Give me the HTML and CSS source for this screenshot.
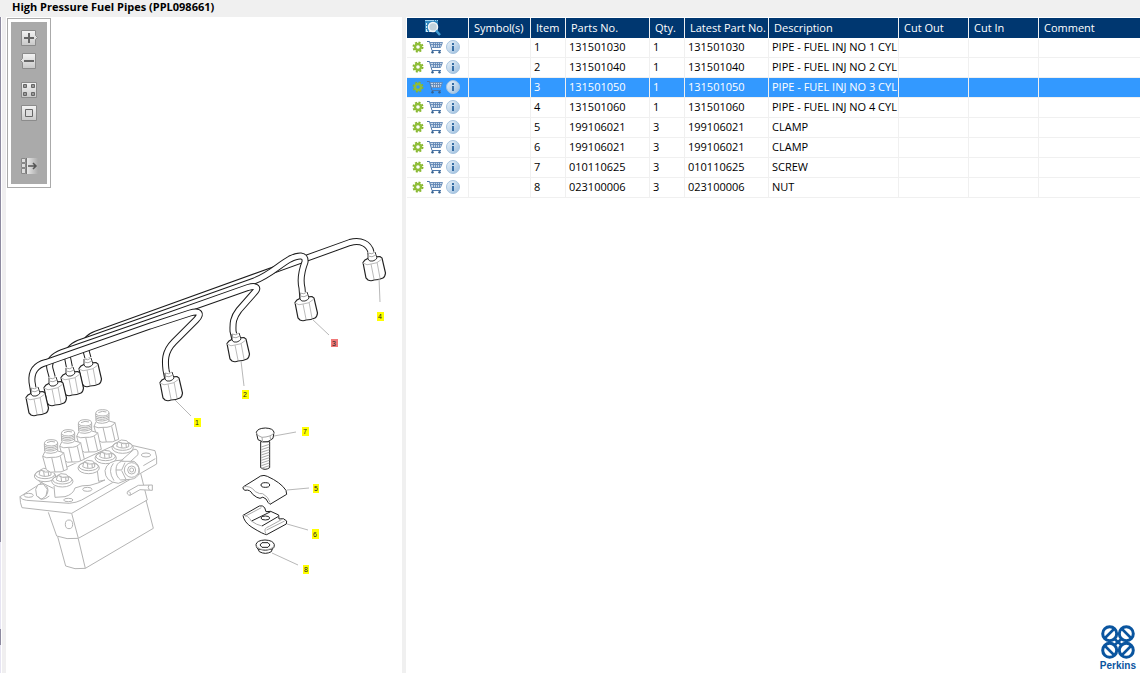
FILE: index.html
```html
<!DOCTYPE html>
<html lang="en">
<head>
<meta charset="utf-8">
<title>High Pressure Fuel Pipes (PPL098661)</title>
<link rel="stylesheet" href="styles.css">
</head>
<body>
<svg class="sprite" aria-hidden="true">
  <defs>
    <linearGradient id="btn" x1="0" y1="0" x2="0" y2="1"><stop offset="0" stop-color="#f4f4f4"/><stop offset="1" stop-color="#c8c8c8"/></linearGradient>
    <linearGradient id="fade" x1="0" y1="0" x2="1" y2="0"><stop offset="0" stop-color="#eee"/><stop offset="1" stop-color="#aaa"/></linearGradient>
    <linearGradient id="ball" x1="0" y1="0" x2="1" y2="1"><stop offset="0" stop-color="#eef5fb"/><stop offset="1" stop-color="#98bbdc"/></linearGradient>
    <symbol id="gear" viewBox="0 0 12 12">
      <circle cx="6" cy="6" r="4.600" fill="none" stroke="#86b52f" stroke-width="1.800" stroke-dasharray="2 1.610"/>
      <circle cx="6" cy="6" r="3" fill="none" stroke="#8fbe38" stroke-width="2.400"/>
    </symbol>
    <symbol id="cart" viewBox="0 0 16 14">
      <path d="M3 2.500H15L13.500 8H5z" fill="#c9d7e8"/>
      <path d="M0 1.500H2.500L5 10.500H14" fill="none" stroke="#4a76aa"/>
      <path d="M3 2.500H15.500L13.500 7.500H4.500M4 4.500H15M6.500 2.500V8M8.500 2.500V8M10.500 2.500V8M12.500 2.500V8" fill="none" stroke="#6288b6" stroke-width=".9"/>
      <circle cx="5.500" cy="12.300" r="1.200" fill="#35608f"/><circle cx="12.500" cy="12.300" r="1.200" fill="#35608f"/>
    </symbol>
    <symbol id="info" viewBox="0 0 14 14">
      <circle cx="7" cy="7" r="6.500" fill="url(#ball)" stroke="#a5c3df"/>
      <path d="M6 3h2v2H6zM6 6h2v5H6z" fill="#376da3"/>
    </symbol>
    <g id="nut">
      <path d="M-9 4.500L-7 2Q-4 0 0-1L8-1.500L10 0L13.500 15Q13 19 11 20Q7 22 2 22Q-1 23.500-4 22L-6 20z" fill="#fff" stroke="#222" stroke-width="1.200"/>
      <path d="M-9 5Q-5 8-1 6Q5 6 10 1M-1 6L2 21M5 4L8 20" fill="none" stroke="#bbb"/>
      <path d="M-4-6Q0-4 3-7L5 0Q1 4-4 2z" fill="#fff"/>
      <path d="M-4-5L-4 1Q-3 4 1 3Q4 2 5 0L3-6" fill="none" stroke="#333"/>
      <path d="M-4-5Q0-3 3-6M-4-2Q0 0 4-3" fill="none" stroke="#aaa"/>
    </g>
    <g id="union" class="part">
      <path d="M-24 43L-13 30L-13 26H15V30L38 31L50 84Q20 104-14 84z" fill="#fff" stroke="none"/>
      <path d="M-20 6Q-20-7 0-7Q20-7 20 3L20 27Q18 32 0 34Q-17 34-19 28zM-20 6Q-14 13 2 12Q18 11 20 3M-19 13Q0 22 20 11M-19 18Q0 27 20 16M-19 23Q0 32 20 21M-12 2Q0-5 12 0"/>
      <path d="M-19 30L-25 43L-14 83M20 27L38 32L49 82M-25 43Q-14 50 2 46Q28 48 38 32M2 46L12 90M28 43L38 86M-14 83Q-2 95 12 90Q30 93 49 82"/>
    </g>
    <g id="bolt" class="part">
      <ellipse cx="0" cy="8" rx="32" ry="17" fill="#fff"/>
      <ellipse cx="0" cy="3" rx="29" ry="13"/>
      <path d="M-18 4L-14-10L-4-15L12-13L18-5V5Q0 14-18 4M-14-10Q0 0 18-5M-4-5L-2 9M10-4L11 8" fill="#fff"/>
    </g>
  </defs>
</svg>

<header class="title-bar"><h1>High Pressure Fuel Pipes (PPL098661)</h1></header>

<main class="workspace">
  <div class="edge"><span class="edge-upper"></span><span class="edge-lower"></span></div>

  <section class="viewer" aria-label="Illustration">
    <svg class="drawing" viewBox="6 17 396 656" preserveAspectRatio="xMinYMin meet" role="img" aria-label="Fuel pipes, injection pump, clamps, screw and nut">
      <g class="pump" transform="translate(10 400) scale(.33333)">
        <path d="M115 337L140 408Q170 420 205 415L412 300L392 220M185 340L205 415M143 410L167 498L195 506L226 505L430 385L408 300M205 417L226 505"/>
        <ellipse cx="177" cy="373" rx="11" ry="13"/>
        <path d="M30 290L90 252L130 220L330 128L435 152Q442 170 440 192L185 340L36 323Q30 310 30 290z" fill="#fff"/>
        <path d="M30 290Q34 300 50 301L178 310Q200 308 215 300L350 224M400 197L436 176"/>
        <ellipse cx="56" cy="286" rx="14" ry="6"/><ellipse cx="175" cy="300" rx="14" ry="5"/><ellipse cx="232" cy="268" rx="14" ry="6"/><ellipse cx="408" cy="165" rx="14" ry="6"/>
        <path d="M132 258L135 292L165 290Q190 283 195 264Q215 255 240 256Q265 250 285 240L266 244L262 212M85 225L88 245L130 265"/>
        <use href="#bolt" x="105" y="220"/>
        <use href="#bolt" x="338" y="135"/>
        <use href="#union" x="277" y="36"/>
        <use href="#bolt" x="287" y="166"/>
        <use href="#union" x="225" y="66"/>
        <use href="#bolt" x="236" y="196"/>
        <use href="#union" x="174" y="96"/>
        <use href="#bolt" x="157" y="236"/>
        <use href="#union" x="123" y="126"/>
        <path d="M77 268L84 254L100 252L112 268L108 288L94 298L80 288zM108 256Q120 270 108 288M84 290Q96 306 118 288" fill="#fff"/>
        <path d="M330 185L372 148Q386 146 384 164L350 195M340 180Q290 180 285 212Q285 246 325 250L350 240" fill="#fff"/>
        <path d="M318 210Q318 188 335 184L372 184Q390 195 388 218Q382 236 362 238L332 240Q318 230 318 210z" fill="#fff"/>
        <path d="M318 210H335L345 188M335 212L348 238M310 190Q292 212 312 242"/>
        <circle cx="365" cy="210" r="22"/><circle cx="365" cy="210" r="12"/><circle cx="365" cy="210" r="6"/>
        <path d="M353 274L385 256L427 255V271L390 269L360 286Q348 284 353 274M417 255Q412 262 418 270M355 275Q364 276 360 286" fill="#fff"/>
      </g>

      <g class="pipes">
        <path class="outer" d="M88 358L85.500 349C84 342 88 337 96 334L150 314.500L350 242.500C361 239.500 369 244 371 252L372 258"/>
        <path class="inner" d="M88 358L85.500 349C84 342 88 337 96 334L150 314.500L350 242.500C361 239.500 369 244 371 252L372 258"/>
        <use href="#nut" x="88" y="364"/>
        <path class="outer" d="M70 370L68 360C66 352 70 347 79 343L150 318L254 281C270 275 279 265 290 259C298 255 306 254 305 262C302 270 300 280 302 288L303 300"/>
        <path class="inner" d="M70 370L68 360C66 352 70 347 79 343L150 318L254 281C270 275 279 265 290 259C298 255 306 254 305 262C302 270 300 280 302 288L303 300"/>
        <use href="#nut" x="70" y="373"/>
        <path class="outer" d="M53 380L50 369C48 361 53 356 62 352.500L150 322L248 287.500C257 285 259 288 254 293L239 310C232 319 233 325 233 331L235 340"/>
        <path class="inner" d="M53 380L50 369C48 361 53 356 62 352.500L150 322L248 287.500C257 285 259 288 254 293L239 310C232 319 233 325 233 331L235 340"/>
        <use href="#nut" x="53" y="383"/>
        <path class="outer" d="M34 394L32 382C31 371 36 365 46 362.500L150 326L190 313C200 310 202 314 196 320L174 342C164 352 165 362 166 370L168 380"/>
        <path class="inner" d="M34 394L32 382C31 371 36 365 46 362.500L150 326L190 313C200 310 202 314 196 320L174 342C164 352 165 362 166 370L168 380"/>
        <use href="#nut" x="35" y="393"/>
        <use href="#nut" x="169" y="378"/>
        <use href="#nut" x="236" y="339"/>
        <use href="#nut" x="304" y="298"/>
        <use href="#nut" x="372" y="258"/>
      </g>

      <g class="fasteners" transform="translate(230 415) scale(.33333)">
        <path d="M92 80V158Q105 168 119 158V80z"/>
        <path class="light" d="M94 96L118 88M94 104L118 96M94 112L118 104M94 120L118 112M94 128L118 120M94 136L118 128M94 144L118 136M94 152L118 144M94 160L118 152"/>
        <path d="M79 52Q82 40 106 39Q130 40 132 52L129 70L114 80Q98 84 84 74z"/>
        <path class="light" d="M79 54Q84 64 96 67Q122 66 132 54M96 67L98 82M120 62L122 76"/>
        <path d="M39 216L92 183Q102 179 112 184Q152 202 168 226L170 238L120 268Q114 264 108 252Q98 242 90 250Q82 250 68 238Q60 222 45 226Q38 224 39 216z"/>
        <path class="light" d="M39 216Q62 210 76 230Q90 238 98 236Q116 246 120 262"/>
        <ellipse cx="106" cy="210" rx="13" ry="7"/>
        <path d="M39 301L88 273Q98 270 104 278L108 290L122 289L146 300L147 312L160 311L170 318L169 327L110 359Q100 358 66 337Q42 322 39 301z"/>
        <path d="M65 318L122 290M96 333L144 305"/>
        <path class="light" d="M45 304L94 278M39 301Q54 300 64 318Q80 330 96 333M108 356Q98 340 118 334L158 312M110 345L164 318"/>
        <ellipse cx="106" cy="309" rx="13" ry="6"/>
        <path d="M78 389Q80 376 105 375Q130 376 133 389Q134 398 127 402L124 410Q106 420 88 410L84 402Q78 398 78 389zM84 402Q106 410 127 402"/>
        <path d="M90 390L96 383H114L120 390L114 397H96z"/>
        <path class="light" d="M79 394Q90 405 106 405Q124 404 132 394"/>
      </g>

      <path class="leader" d="M175 400L191 416M241 361L244 386M312 319L329 335M379 278L380 302M274 436L296 432M287 490L309 488M287 524L308 530M272 553L298 565"/>

      <g class="callouts">
        <path d="M194 418h7v9h-7zM242 390h7v9h-7zM377 312h7v9h-7zM302 427h7v9h-7zM313 484h6v9h-6zM312 529h7v10h-7zM303 565h6v9h-6z"/>
        <path class="active" d="M331 339h7v8h-7z"/>
        <text x="197" y="425">1</text><text x="245" y="397">2</text><text x="334" y="346">3</text><text x="380" y="319">4</text>
        <text x="305" y="434">7</text><text x="316" y="491">5</text><text x="315" y="537">6</text><text x="306" y="572">8</text>
      </g>
    </svg>

    <div class="toolbar" role="toolbar" aria-label="View">
      <div class="tools">
        <button type="button" aria-label="Zoom in"><svg viewBox="0 0 18 16"><path d="M1.500.500h14v5l2 2-2 2v6h-14z" fill="url(#btn)" stroke="#8b8b8b"/><path d="M4 8h10M9 3v10" stroke="#666" stroke-width="2"/></svg></button>
        <button type="button" aria-label="Zoom out"><svg viewBox="0 0 18 16"><path d="M2.500.500h13v15h-13v-6l-2-2 2-2z" fill="url(#btn)" stroke="#8b8b8b"/><path d="M4 8h10" stroke="#666" stroke-width="2"/></svg></button>
        <button type="button" class="apart" aria-label="Fit all"><svg viewBox="0 0 18 16"><path d="M1.500.500h15v15h-15z" fill="url(#btn)" stroke="#8b8b8b"/><path d="M3.500 2.500h3v3h-3zM11.500 2.500h3v3h-3zM3.500 10.500h3v3h-3zM11.500 10.500h3v3h-3z" fill="#999" stroke="#666"/></svg></button>
        <button type="button" aria-label="Actual size"><svg viewBox="0 0 18 16"><path d="M1.500.500h15v15h-15z" fill="url(#btn)" stroke="#8b8b8b"/><path d="M5.500 4.500h7v7h-7z" fill="#ddd" stroke="#666"/></svg></button>
        <button type="button" class="far" aria-label="Toggle list"><svg viewBox="0 0 18 16"><path d="M6 0h12v16H6z" fill="url(#fade)"/><path d="M1.500.500h4v4h-4zM1.500 5.500h4v4h-4zM1.500 10.500h4v5h-4z" fill="#ddd" stroke="#888"/><path d="M6.500 0v16" stroke="#777"/><path d="M8 8h8M13 5l3 3-3 3" fill="none" stroke="#555" stroke-width="1.500"/></svg></button>
      </div>
    </div>
  </section>

  <div class="splitter"></div>

  <section class="parts" aria-label="Parts list">
    <table>
      <colgroup><col class="c-tools"><col class="c-symbol"><col class="c-item"><col class="c-part"><col class="c-qty"><col class="c-latest"><col class="c-desc"><col class="c-cut"><col class="c-cut"><col></colgroup>
      <thead>
        <tr>
          <th scope="col"><button type="button" class="find" aria-label="Search list"><svg viewBox="0 0 18 18"><path d="M1 1h13v12H1z" fill="#2f86bd"/><path d="M1 1.500h13" stroke="#9fd2ee" stroke-dasharray="9 1 1 1"/><path d="M2.500 4v8M2 12.500h5" stroke="#d6ecf7" stroke-dasharray="2 1"/><circle cx="9" cy="8" r="4.500" fill="#c2d3dc" stroke="#f2f6f8" stroke-width="1.500"/><path d="M12 11.500l4 4.500" stroke="#3f9bd2" stroke-width="2.500"/></svg></button></th>
          <th scope="col">Symbol(s)</th><th scope="col">Item</th><th scope="col">Parts No.</th><th scope="col">Qty.</th><th scope="col">Latest Part No.</th><th scope="col">Description</th><th scope="col">Cut Out</th><th scope="col">Cut In</th><th scope="col">Comment</th>
        </tr>
      </thead>
      <tbody>
        <tr><td><div class="actions"><button type="button" aria-label="Options"><svg class="i-gear"><use href="#gear"/></svg></button><button type="button" aria-label="Add to cart"><svg class="i-cart"><use href="#cart"/></svg></button><button type="button" aria-label="Information"><svg class="i-info"><use href="#info"/></svg></button></div></td><td></td><td>1</td><td>131501030</td><td>1</td><td>131501030</td><td>PIPE - FUEL INJ NO 1 CYL</td><td></td><td></td><td></td></tr>
        <tr><td><div class="actions"><button type="button" aria-label="Options"><svg class="i-gear"><use href="#gear"/></svg></button><button type="button" aria-label="Add to cart"><svg class="i-cart"><use href="#cart"/></svg></button><button type="button" aria-label="Information"><svg class="i-info"><use href="#info"/></svg></button></div></td><td></td><td>2</td><td>131501040</td><td>1</td><td>131501040</td><td>PIPE - FUEL INJ NO 2 CYL</td><td></td><td></td><td></td></tr>
        <tr class="selected" aria-selected="true"><td><div class="actions"><button type="button" aria-label="Options"><svg class="i-gear"><use href="#gear"/></svg></button><button type="button" aria-label="Add to cart"><svg class="i-cart"><use href="#cart"/></svg></button><button type="button" aria-label="Information"><svg class="i-info"><use href="#info"/></svg></button></div></td><td></td><td>3</td><td>131501050</td><td>1</td><td>131501050</td><td>PIPE - FUEL INJ NO 3 CYL</td><td></td><td></td><td></td></tr>
        <tr><td><div class="actions"><button type="button" aria-label="Options"><svg class="i-gear"><use href="#gear"/></svg></button><button type="button" aria-label="Add to cart"><svg class="i-cart"><use href="#cart"/></svg></button><button type="button" aria-label="Information"><svg class="i-info"><use href="#info"/></svg></button></div></td><td></td><td>4</td><td>131501060</td><td>1</td><td>131501060</td><td>PIPE - FUEL INJ NO 4 CYL</td><td></td><td></td><td></td></tr>
        <tr><td><div class="actions"><button type="button" aria-label="Options"><svg class="i-gear"><use href="#gear"/></svg></button><button type="button" aria-label="Add to cart"><svg class="i-cart"><use href="#cart"/></svg></button><button type="button" aria-label="Information"><svg class="i-info"><use href="#info"/></svg></button></div></td><td></td><td>5</td><td>199106021</td><td>3</td><td>199106021</td><td>CLAMP</td><td></td><td></td><td></td></tr>
        <tr><td><div class="actions"><button type="button" aria-label="Options"><svg class="i-gear"><use href="#gear"/></svg></button><button type="button" aria-label="Add to cart"><svg class="i-cart"><use href="#cart"/></svg></button><button type="button" aria-label="Information"><svg class="i-info"><use href="#info"/></svg></button></div></td><td></td><td>6</td><td>199106021</td><td>3</td><td>199106021</td><td>CLAMP</td><td></td><td></td><td></td></tr>
        <tr><td><div class="actions"><button type="button" aria-label="Options"><svg class="i-gear"><use href="#gear"/></svg></button><button type="button" aria-label="Add to cart"><svg class="i-cart"><use href="#cart"/></svg></button><button type="button" aria-label="Information"><svg class="i-info"><use href="#info"/></svg></button></div></td><td></td><td>7</td><td>010110625</td><td>3</td><td>010110625</td><td>SCREW</td><td></td><td></td><td></td></tr>
        <tr><td><div class="actions"><button type="button" aria-label="Options"><svg class="i-gear"><use href="#gear"/></svg></button><button type="button" aria-label="Add to cart"><svg class="i-cart"><use href="#cart"/></svg></button><button type="button" aria-label="Information"><svg class="i-info"><use href="#info"/></svg></button></div></td><td></td><td>8</td><td>023100006</td><td>3</td><td>023100006</td><td>NUT</td><td></td><td></td><td></td></tr>
      </tbody>
    </table>
    <div class="brand">
      <svg viewBox="0 0 34 34" aria-hidden="true"><g fill="none" stroke="#0a559f" stroke-width="3"><circle cx="8.700" cy="8.700" r="7"/><circle cx="25.300" cy="8.700" r="7"/><circle cx="8.700" cy="25.300" r="7"/><circle cx="25.300" cy="25.300" r="7"/><path d="M4 13L13 4M21 4l9 9M4 21l9 9M21 30l9-9M13 13.500l8 7M21 13.500l-8 7" stroke-width="2.600"/></g></svg>
      <span>Perkins</span>
    </div>
  </section>
</main>
</body>
</html>
```
FILE: styles.css
```css
* { box-sizing: border-box; }

body {
  margin: 0;
  min-height: 100vh;
  display: flex;
  flex-direction: column;
  background: #fff;
  color: #000;
  font: 11px/14px "Open Sans", "Noto Sans", sans-serif;
}

button { padding: 0; border: 0; background: none; display: block; cursor: pointer; }
svg { display: block; }
.sprite { position: absolute; width: 0; height: 0; }

.title-bar { height: 17px; padding: 0 12px; background: #f0f0f0; }
h1 { margin: 0; font-size: 11px; line-height: 14px; font-weight: 700; }

.workspace { flex: 1; display: flex; align-items: stretch; }

.edge {
  flex: 0 0 6px;
  display: flex;
  flex-direction: column;
  justify-content: space-between;
  background: linear-gradient(90deg, #e6e4f2 1px, #fff 1px, #fff 2px, #f0eff0 2px);
}
.edge-upper { width: 1px; height: 80%; background: #8d8aa0; }
.edge-lower { width: 1px; height: 16px; margin-bottom: 28px; background: #8d8aa0; }

.viewer { flex: 0 0 396px; position: relative; }
.drawing { width: 100%; }
.part path, .part ellipse,
.drawing path, .drawing ellipse, .drawing circle { vector-effect: non-scaling-stroke; }
.pump { fill: none; stroke: #b4b4b4; stroke-width: 1; }
.pipes .outer { fill: none; stroke: #1c1c1c; stroke-width: 7; }
.pipes .inner { fill: none; stroke: #fff; stroke-width: 5; }
.fasteners { fill: #fff; stroke: #222; stroke-width: 1; }
.fasteners .light { fill: none; stroke: #aaa; }
.leader { fill: none; stroke: #b8b8b8; }
.callouts { fill: #ff0; font: 7px "Liberation Sans", Arial, sans-serif; text-anchor: middle; }
.callouts .active { fill: #f07878; }
.callouts text { fill: #222; }

.toolbar {
  position: absolute;
  top: 1px;
  left: 1px;
  padding: 3px;
  border: 1px solid #aaa;
  background: #fff;
}
.tools {
  width: 36px;
  padding: 8px 9px 10px;
  display: flex;
  flex-direction: column;
  gap: 7px;
  background: #aaa;
}
.tools svg { width: 18px; height: 16px; }
.tools .apart { margin-top: 6px; }
.tools .far { margin-top: 30px; }

.splitter { flex: 0 0 4px; background: #f0f0f0; }

.parts {
  flex: 1;
  min-width: 0;
  padding: 1px 0 0 1px;
  display: flex;
  flex-direction: column;
  justify-content: space-between;
}

table { width: 100%; table-layout: fixed; border-collapse: separate; border-spacing: 0; }
.c-tools, .c-symbol { width: 62px; }
.c-item, .c-qty { width: 35px; }
.c-part, .c-latest { width: 84px; }
.c-desc { width: 130px; }
.c-cut { width: 70px; }

th, td { text-align: left; font-weight: 400; white-space: nowrap; border-right: 1px solid #f0f0f0; }
th:last-child, td:last-child { border-right: 0; }
th { height: 20px; padding: 0 0 0 5px; background: #003770; color: #fff; }
th:first-child { padding: 0 0 0 17px; }
td { height: 20px; padding: 0 0 1px 3px; border-bottom: 1px solid #f0f0f0; }
td:first-child { padding: 0 0 2px 5px; }
.selected td { background: #39f; color: #fff; }

.find svg { width: 18px; height: 18px; }
.actions { display: flex; align-items: center; gap: 3px; }
.i-gear { width: 12px; height: 12px; }
.i-cart { width: 16px; height: 14px; }
.i-info { width: 14px; height: 14px; }

.brand {
  align-self: flex-end;
  display: flex;
  flex-direction: column;
  align-items: center;
  padding-right: 4px;
  color: #0a559f;
  font: bold 10px/14px "Liberation Sans", Arial, sans-serif;
}
.brand svg { width: 34px; height: 34px; }
```
